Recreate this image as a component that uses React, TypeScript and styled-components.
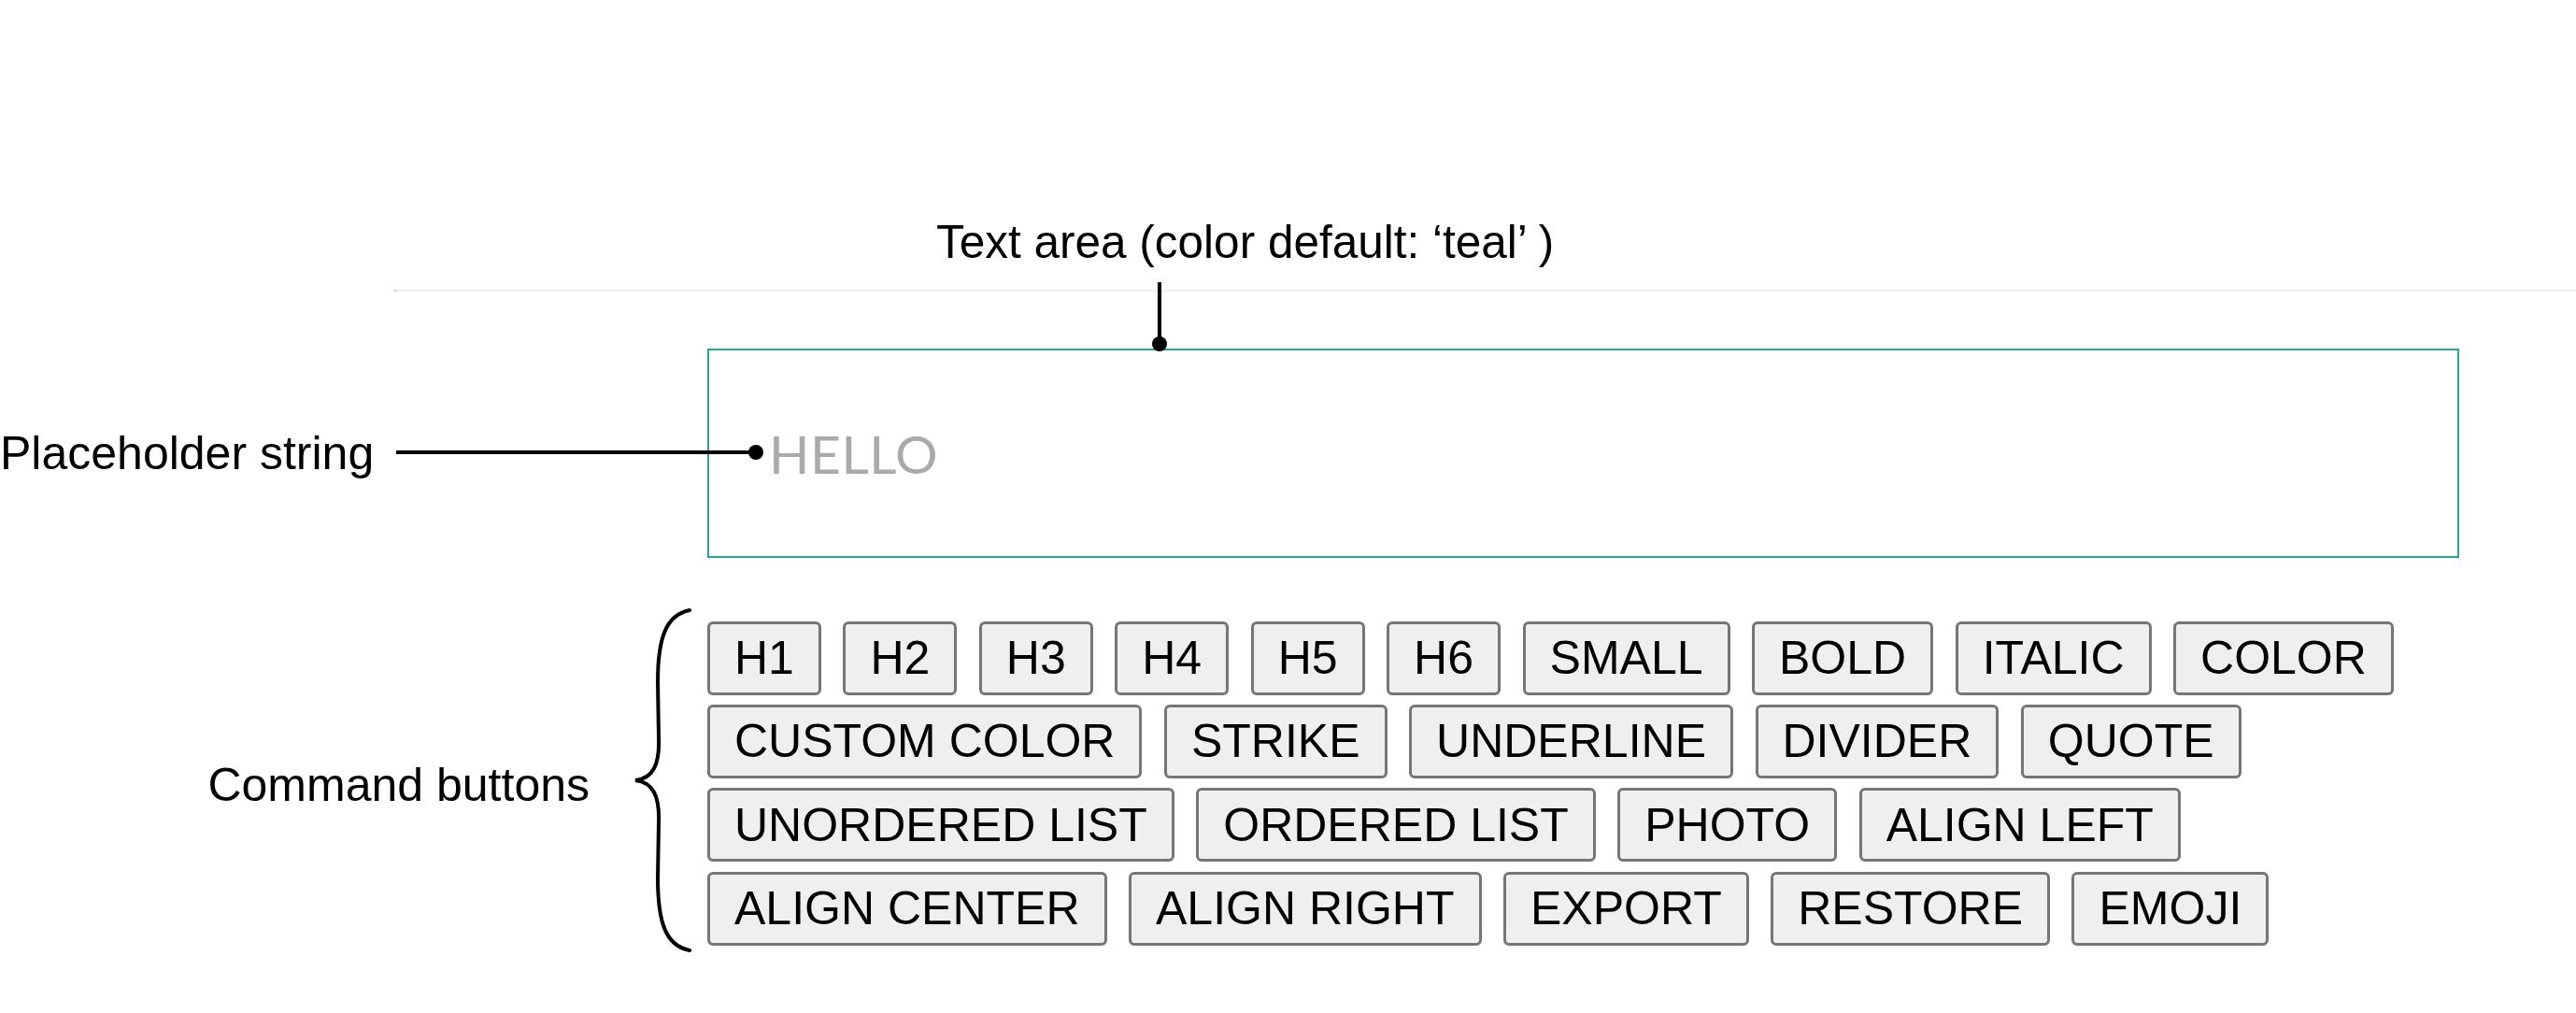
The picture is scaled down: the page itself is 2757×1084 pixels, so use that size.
import React from "react";
import styled, { createGlobalStyle } from "styled-components";

const Global = createGlobalStyle`
  html, body {
    margin: 0;
    padding: 0;
    background: #ffffff;
  }
  body {
    width: 2757px;
    height: 1084px;
    overflow: hidden;
    font-family: "Liberation Sans", Arial, sans-serif;
    color: #000;
  }
`;

const Page = styled.main`
  display: grid;
  grid-template-columns: 757px 1875px 1fr;
  align-items: start;
  padding-top: 234px;
`;

const Caption = styled.div`
  grid-column: 2 / 3;
  padding-left: 245px;
  font-size: 49.5px;
  line-height: 1;
  white-space: nowrap;
`;

const Rule = styled.hr`
  grid-column: 1 / -1;
  margin: 26px 0 0 422px;
  height: 2px;
  border: 0;
  border-left: 2px solid #c4c4c4;
  background: #eeeeee;
`;

const SideLabel = styled.div<{ $withBrace?: boolean }>`
  grid-column: 1 / 2;
  align-self: stretch;
  display: flex;
  align-items: center;
  justify-content: ${(p) => (p.$withBrace ? "flex-end" : "flex-start")};
  padding-right: ${(p) => (p.$withBrace ? "16px" : "0")};
  margin-top: ${(p) => (p.$withBrace ? "68px" : "61px")};
  font-size: 50px;
  line-height: 1;
  white-space: nowrap;
`;

const LabelText = styled.span<{ $gap?: number }>`
  margin-right: ${(p) => p.$gap ?? 0}px;
  padding-top: ${(p) => (p.$gap ? "4px" : "0")};
`;

const FieldWrap = styled.div`
  grid-column: 2 / 3;
  position: relative;
  margin-top: 61px;
  height: 224px;
`;

const TextArea = styled.textarea`
  box-sizing: border-box;
  display: block;
  width: 100%;
  height: 100%;
  margin: 0;
  border: 2px solid #26a69a;
  border-radius: 0;
  padding: 82px 20px 0 64px;
  resize: none;
  outline: none;
  background: #fff;
  font-family: Lato, "Open Sans", sans-serif;
  font-weight: 400;
  font-size: 57px;
  line-height: 1;
  letter-spacing: 0.5px;
  color: #333;
  &::placeholder {
    color: #aaaaaa;
    opacity: 1;
  }
`;

const Overlay = styled.svg`
  position: absolute;
  overflow: visible;
  pointer-events: none;
`;

const HLeader = styled(Overlay)`
  left: -333px;
  top: 101px;
  width: 395px;
  height: 20px;
`;

const VLeader = styled(Overlay)`
  left: 474px;
  top: -71px;
  width: 20px;
  height: 76px;
`;

const Brace = styled.svg`
  flex: none;
  width: 66px;
  height: 370px;
  margin: -15px 0 -9px;
  overflow: visible;
`;

const Buttons = styled.div`
  grid-column: 2 / 3;
  margin-top: 68px;
  display: flex;
  flex-wrap: wrap;
  align-content: flex-start;
  column-gap: 23.5px;
  row-gap: 10.4px;
`;

const CmdButton = styled.button`
  box-sizing: border-box;
  height: 79px;
  padding: 0 26px;
  border: 3px solid #767676;
  border-radius: 6px;
  background: #efefef;
  color: #000;
  font-family: "Liberation Sans", Arial, sans-serif;
  font-size: 50px;
  line-height: 1;
  white-space: nowrap;
  cursor: pointer;
`;

const commands = [
  "H1", "H2", "H3", "H4", "H5", "H6", "SMALL", "BOLD", "ITALIC", "COLOR",
  "CUSTOM COLOR", "STRIKE", "UNDERLINE", "DIVIDER", "QUOTE",
  "UNORDERED LIST", "ORDERED LIST", "PHOTO", "ALIGN LEFT",
  "ALIGN CENTER", "ALIGN RIGHT", "EXPORT", "RESTORE", "EMOJI",
];

export default function App() {
  return (
    <>
      <Global />
      <Page>
        <Caption>Text area (color default: ‘teal’ )</Caption>
        <Rule />

        <SideLabel>
          <LabelText>Placeholder string</LabelText>
        </SideLabel>
        <FieldWrap>
          <TextArea placeholder="HELLO" />
          <HLeader viewBox="0 0 395 20">
            <line x1="0" y1="10" x2="385" y2="10" stroke="#000" strokeWidth="4" />
            <circle cx="385" cy="10" r="8" fill="#000" />
          </HLeader>
          <VLeader viewBox="0 0 20 76">
            <line x1="10" y1="0" x2="10" y2="66" stroke="#000" strokeWidth="4" />
            <circle cx="10" cy="66" r="8" fill="#000" />
          </VLeader>
        </FieldWrap>

        <SideLabel $withBrace>
          <LabelText $gap={44}>Command buttons</LabelText>
          <Brace viewBox="0 0 66 370">
            <path
              d="M63 3 C 38 8, 29 32, 29 80 L 30 140 C 31 168, 24 183, 5 185 C 24 187, 31 202, 30 230 L 29 290 C 29 338, 38 362, 63 367"
              fill="none"
              stroke="#000"
              strokeWidth="4"
              strokeLinecap="round"
            />
          </Brace>
        </SideLabel>
        <Buttons>
          {commands.map((c) => (
            <CmdButton key={c} type="button">
              {c}
            </CmdButton>
          ))}
        </Buttons>
      </Page>
    </>
  );
}
